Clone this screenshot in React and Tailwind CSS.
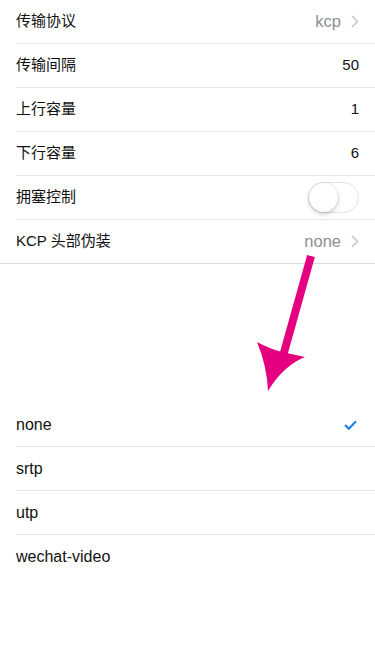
import { Fragment } from "react";

const font = { fontFamily: '"Liberation Sans", "Noto Sans CJK SC", sans-serif' };

const Chevron = () => (
  <svg width="8" height="13" viewBox="0 0 8 13" className="ml-[10px]">
    <path d="M1 1l5.5 5.5L1 12" fill="none" stroke="#c7c7cc" strokeWidth="1.6" />
  </svg>
);

const Toggle = () => (
  <div className="relative h-[31px] w-[51px] rounded-full border border-[#e3e3e6] bg-white">
    <div className="absolute left-0 top-0 h-[29px] w-[29px] rounded-full bg-white shadow-[0_2px_4px_rgba(0,0,0,0.22),0_0_0_0.5px_rgba(0,0,0,0.08)]" />
  </div>
);

const settings = [
  { label: "传输协议", value: "kcp", link: true },
  { label: "传输间隔", value: "50", dark: true },
  { label: "上行容量", value: "1", dark: true },
  { label: "下行容量", value: "6", dark: true },
  { label: "拥塞控制", toggle: true },
  { label: "KCP 头部伪装", value: "none", link: true },
];

const options = ["none", "srtp", "utp", "wechat-video"];

export default function App() {
  return (
    <div className="relative h-[667px] w-[375px] overflow-hidden bg-white text-[15px] text-[#111]" style={font}>
      {/* settings group */}
      <div className="border-b border-[#dcdcdf]">
        {settings.map((s, i) => (
          <div key={s.label} className="pl-4">
            <div
              className={
                "flex items-center pr-4 " +
                (i < settings.length - 1 ? "h-[44px] border-b border-[#e6e6e8]" : "h-[43px]")
              }
            >
              <span className="flex-1">{s.label}</span>
              {s.toggle ? (
                <Toggle />
              ) : (
                <span
                  className={
                    "flex items-center " +
                    (s.dark ? "text-[#111]" : "text-[16.5px] text-[#8e8e93]")
                  }
                >
                  {s.value}
                  {s.link && <Chevron />}
                </span>
              )}
            </div>
          </div>
        ))}
      </div>

      {/* option list */}
      <div className="mt-[139px] text-[16px]">
        {options.map((o, i) => (
          <Fragment key={o}>
            <div className="pl-4">
              <div
                className={
                  "flex h-[44px] items-center pr-[18px] " +
                  (i < options.length - 1 ? "border-b border-[#e6e6e8]" : "")
                }
              >
                <span className="flex-1">{o}</span>
                {o === "none" && (
                  <svg width="13" height="10" viewBox="0 0 13 10">
                    <path d="M1 5l3.8 3.8L12 1.2" fill="none" stroke="#1a7cf5" strokeWidth="2" />
                  </svg>
                )}
              </div>
            </div>
          </Fragment>
        ))}
      </div>

      {/* annotation arrow */}
      <svg className="pointer-events-none absolute left-0 top-0" width="375" height="667" viewBox="0 0 375 667">
        <line x1="311" y1="256" x2="283" y2="356" stroke="#e5007f" strokeWidth="8" />
        <path
          d="M257 342 Q270 349 282 352 L305 357 Q283 366 268 391 Q267 366 257 342 Z"
          fill="#e5007f"
        />
      </svg>
    </div>
  );
}
